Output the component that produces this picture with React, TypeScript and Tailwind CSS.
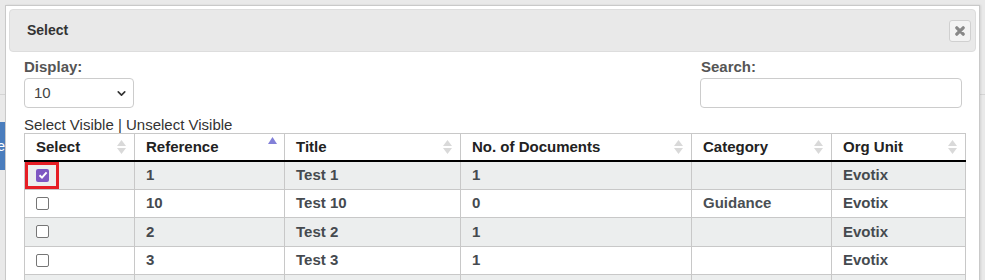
import { ChevronDown } from "lucide-react";

type Row = {
  ref: string;
  title: string;
  docs: string;
  category: string;
  org: string;
  checked?: boolean;
};

const rows: Row[] = [
  { ref: "1", title: "Test 1", docs: "1", category: "", org: "Evotix", checked: true },
  { ref: "10", title: "Test 10", docs: "0", category: "Guidance", org: "Evotix" },
  { ref: "2", title: "Test 2", docs: "1", category: "", org: "Evotix" },
  { ref: "3", title: "Test 3", docs: "1", category: "", org: "Evotix" },
  { ref: "4", title: "Test 4", docs: "1", category: "", org: "Evotix" },
];

const columns = [
  { label: "Select", width: "w-[110px]" },
  { label: "Reference", width: "w-[150px]", sorted: true },
  { label: "Title", width: "w-[176px]" },
  { label: "No. of Documents", width: "w-[231px]" },
  { label: "Category", width: "w-[140px]" },
  { label: "Org Unit", width: "w-[134px]" },
];

function SortIcon({ sorted }: { sorted?: boolean }) {
  if (sorted) {
    return (
      <svg width="9" height="14" viewBox="0 0 9 14" className="absolute right-[7px] top-[3px]">
        <path d="M4.5 0 L9 7 L0 7 Z" fill="#8280d8" />
      </svg>
    );
  }
  return (
    <svg width="9" height="15" viewBox="0 0 9 15" className="absolute right-[8px] top-[6px]">
      <path d="M4.5 0 L9 6 L0 6 Z" fill="#d9d9d9" />
      <path d="M0 8 L9 8 L4.5 14 Z" fill="#d9d9d9" />
    </svg>
  );
}

function Checkbox({ checked }: { checked?: boolean }) {
  if (checked) {
    return (
      <span className="flex h-[13px] w-[13px] items-center justify-center rounded-[2px] bg-[#7e57c2]">
        <svg width="10" height="10" viewBox="0 0 10 10">
          <path d="M1.5 5.2 L4 7.6 L8.6 2.4" stroke="white" strokeWidth="2" fill="none" />
        </svg>
      </span>
    );
  }
  return <span className="block h-[13px] w-[13px] rounded-[2px] border border-[#767676] bg-white" />;
}

export default function App() {
  return (
    <div
      className="relative h-[280px] w-[985px] overflow-hidden bg-[#e9e9e9]"
      style={{ fontFamily: '"Liberation Sans", Arial, sans-serif' }}
    >
      {/* page behind the dialog */}
      <div className="absolute left-0 right-0 top-[94px] h-px bg-[#d4d4d4]" />
      <div className="absolute left-[-40px] top-[122px] flex h-[48px] w-[46px] items-center justify-end bg-[#4a7dbd] pr-[1px] text-[14px] text-white">
        e
      </div>

      <div className="relative ml-[5px] mt-[5px] h-[290px] w-[975px] border border-[#c9c9c9] bg-white p-[3px] shadow-[1px_0_2px_rgba(0,0,0,0.1)]">
        <div className="flex h-[43px] items-center justify-between rounded-[4px] border border-[#dddddd] bg-[#e9e9e9] pl-[17px] pr-[4px]">
          <span className="text-[14px] font-bold text-[#333]">Select</span>
          <button className="flex h-[22px] w-[22px] items-center justify-center rounded-[3px] border border-[#d0d0d0] bg-[#f3f3f3]">
            <svg width="10" height="10" viewBox="0 0 10 10">
              <path d="M1.8 1.8 L8.2 8.2 M8.2 1.8 L1.8 8.2" stroke="#888" strokeWidth="3.2" strokeLinecap="round" />
            </svg>
          </button>
        </div>

        <div className="pl-[15px]">
          <div className="mt-[6px] flex w-[938px] justify-between">
            <div className="flex flex-col">
              <label className="text-[15px] font-bold leading-[18px] text-[#555]">Display:</label>
              <div className="mt-[2px] flex h-[30px] w-[110px] items-center justify-between rounded-[4px] border border-[#cccccc] pl-[9px] pr-[5px] text-[15px] text-[#444]">
                <span>10</span>
                <ChevronDown size={13} strokeWidth={3} className="text-[#333]" />
              </div>
            </div>
            <div className="flex flex-col">
              <label className="pl-[1px] text-[15px] font-bold leading-[18px] text-[#555]">Search:</label>
              <input className="mt-[2px] h-[30px] w-[262px] rounded-[4px] border border-[#cccccc] bg-white outline-none" />
            </div>
          </div>

          <div className="mt-[8px] text-[15px] leading-[17px] text-[#333]">
            Select Visible | Unselect Visible
          </div>

          <table className="w-[941px] table-fixed border-collapse text-[15px]">
            <thead>
              <tr className="h-[27px] border-b-2 border-b-black">
                {columns.map((c) => (
                  <th
                    key={c.label}
                    className={`${c.width} relative border border-b-0 border-[#c8c8c8] pl-[11px] text-left font-bold text-[#222]`}
                  >
                    {c.label}
                    <SortIcon sorted={c.sorted} />
                  </th>
                ))}
              </tr>
            </thead>
            <tbody>
              {rows.map((r, i) => (
                <tr key={r.ref} className={`h-[28.6px] ${i % 2 === 0 ? "bg-[#eceeee]" : "bg-white"}`}>
                  <td className="relative border border-[#c8c8c8] pl-[11px]">
                    <Checkbox checked={r.checked} />
                    {r.checked && (
                      <span className="absolute left-0 top-0 h-[27px] w-[34px] border-[3px] border-[#e61e25]" />
                    )}
                  </td>
                  <td className="border border-[#c8c8c8] pl-[11px] font-bold text-[#454a4f]">{r.ref}</td>
                  <td className="border border-[#c8c8c8] pl-[11px] font-bold text-[#454a4f]">{r.title}</td>
                  <td className="border border-[#c8c8c8] pl-[11px] font-bold text-[#454a4f]">{r.docs}</td>
                  <td className="border border-[#c8c8c8] pl-[11px] font-bold text-[#4a4f54]">{r.category}</td>
                  <td className="border border-[#c8c8c8] pl-[11px] font-bold text-[#454a4f]">{r.org}</td>
                </tr>
              ))}
            </tbody>
          </table>
        </div>
      </div>
    </div>
  );
}
